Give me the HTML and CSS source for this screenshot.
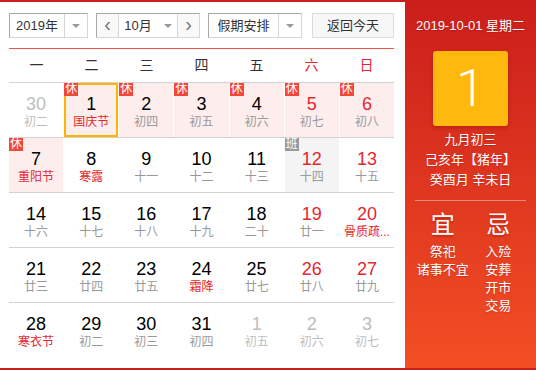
FILE: index.html
```html
<!DOCTYPE html>
<html>
	<head>
		<meta charset="UTF-8">
		<title>万年历</title>
		<link rel="stylesheet" href="styles.css">
	</head>
	<body>
		<div class="calendar">
			<div class="main">
				<div class="toolbar">
					<div class="select year">
						<span class="val">2019年</span>
						<span class="arrow"><i class="tri"></i></span>
					</div>
					<div class="select month">
						<span class="btn">&lsaquo;</span>
						<span class="val">10月<i class="tri"></i></span>
						<span class="btn">&rsaquo;</span>
					</div>
					<div class="select holiday">
						<span class="val">假期安排</span>
						<span class="arrow"><i class="tri"></i></span>
					</div>
					<div class="today-btn">返回今天</div>
				</div>
				<div class="week-head">
					<span>一</span><span>二</span><span>三</span><span>四</span><span>五</span>
					<span class="red">六</span><span class="red">日</span>
				</div>
				<div class="days">
					<div class="week">
						<div class="day other"><b>30</b><em>初二</em></div>
						<div class="day rest today"><i class="tag">休</i><b>1</b><em class="fest">国庆节</em></div>
						<div class="day rest"><i class="tag">休</i><b>2</b><em>初四</em></div>
						<div class="day rest"><i class="tag">休</i><b>3</b><em>初五</em></div>
						<div class="day rest"><i class="tag">休</i><b>4</b><em>初六</em></div>
						<div class="day rest weekend"><i class="tag">休</i><b>5</b><em>初七</em></div>
						<div class="day rest weekend"><i class="tag">休</i><b>6</b><em>初八</em></div>
					</div>
					<div class="week">
						<div class="day rest"><i class="tag">休</i><b>7</b><em class="fest">重阳节</em></div>
						<div class="day"><b>8</b><em class="fest">寒露</em></div>
						<div class="day"><b>9</b><em>十一</em></div>
						<div class="day"><b>10</b><em>十二</em></div>
						<div class="day"><b>11</b><em>十三</em></div>
						<div class="day work weekend"><i class="tag">班</i><b>12</b><em>十四</em></div>
						<div class="day weekend"><b>13</b><em>十五</em></div>
					</div>
					<div class="week">
						<div class="day"><b>14</b><em>十六</em></div>
						<div class="day"><b>15</b><em>十七</em></div>
						<div class="day"><b>16</b><em>十八</em></div>
						<div class="day"><b>17</b><em>十九</em></div>
						<div class="day"><b>18</b><em>二十</em></div>
						<div class="day weekend"><b>19</b><em>廿一</em></div>
						<div class="day weekend"><b>20</b><em class="fest">骨质疏...</em></div>
					</div>
					<div class="week">
						<div class="day"><b>21</b><em>廿三</em></div>
						<div class="day"><b>22</b><em>廿四</em></div>
						<div class="day"><b>23</b><em>廿五</em></div>
						<div class="day"><b>24</b><em class="fest">霜降</em></div>
						<div class="day"><b>25</b><em>廿七</em></div>
						<div class="day weekend"><b>26</b><em>廿八</em></div>
						<div class="day weekend"><b>27</b><em>廿九</em></div>
					</div>
					<div class="week last">
						<div class="day"><b>28</b><em class="fest">寒衣节</em></div>
						<div class="day"><b>29</b><em>初二</em></div>
						<div class="day"><b>30</b><em>初三</em></div>
						<div class="day"><b>31</b><em>初四</em></div>
						<div class="day other"><b>1</b><em>初五</em></div>
						<div class="day other"><b>2</b><em>初六</em></div>
						<div class="day other"><b>3</b><em>初七</em></div>
					</div>
				</div>
			</div>
			<div class="side">
				<p class="date">2019-10-01 星期二</p>
				<div class="big">1</div>
				<div class="lunar">
					<p>九月初三</p>
					<p>己亥年【猪年】</p>
					<p>癸酉月 辛未日</p>
				</div>
				<div class="line"></div>
				<div class="yiji">
					<div class="col">
						<h3>宜</h3>
						<p>祭祀</p>
						<p>诸事不宜</p>
					</div>
					<div class="col">
						<h3>忌</h3>
						<p>入殓</p>
						<p>安葬</p>
						<p>开市</p>
						<p>交易</p>
					</div>
				</div>
			</div>
		</div>
	</body>
</html>
```

FILE: styles.css
```css
*{
	margin: 0;
	padding: 0;
	box-sizing: border-box;
}
body{
	font-family: "Liberation Sans", "Noto Sans CJK SC", sans-serif;
	color: #000;
	background: #fff;
}
.calendar{
	display: flex;
	height: 370px;
	width: 536px;
	border-top: 2px solid #cc1f1c;
	border-bottom: 2px solid #cc1f1c;
}
.main{
	width: 405px;
	flex: none;
	padding: 11px 11px 0 9px;
}
/* 顶部工具条 */
.toolbar{
	display: flex;
	height: 36px;
	padding-bottom: 11px;
	border-bottom: 1px solid #e8594a;
	font-size: 13px;
	color: #333;
}
.select{
	display: flex;
	height: 25px;
	border: 1px solid #c9c9c9;
	border-color: #a9a9a9 #d6d6d6 #d6d6d6 #a9a9a9;
	background: #fff;
	margin-right: 8px;
}
.select .val{
	display: flex;
	align-items: center;
	justify-content: center;
	line-height: 23px;
}
.select .arrow{
	width: 23px;
	display: flex;
	align-items: center;
	justify-content: center;
	border-left: 1px solid #d6d6d6;
}
.tri{
	display: inline-block;
	width: 0;
	height: 0;
	border-left: 4px solid transparent;
	border-right: 4px solid transparent;
	border-top: 4px solid #999;
}
.year .val{
	width: 54px;
}
.month .btn{
	width: 21px;
	text-align: center;
	line-height: 21px;
	font-size: 20px;
	color: #777;
	background: #f9f9f9;
}
.month .val{
	width: 60px;
	border-left: 1px solid #d6d6d6;
	border-right: 1px solid #d6d6d6;
}
.month .tri{
	margin-left: 12px;
}
.holiday{
	margin-right: 10px;
}
.holiday .val{
	width: 69px;
}
.today-btn{
	width: 82px;
	height: 25px;
	line-height: 23px;
	text-align: center;
	border: 1px solid #dcdcdc;
	background: #f7f7f7;
}
/* 星期 */
.week-head{
	display: flex;
	height: 34px;
	border-bottom: 1px solid #d2d2d2;
	font-size: 14px;
	color: #333;
}
.week-head span{
	flex: 1;
	text-align: center;
	line-height: 32px;
}
.red{
	color: #e3272e;
}
/* 日期格子 */
.week{
	display: grid;
	grid-template-columns: repeat(7, 1fr);
	column-gap: 1px;
	height: 55px;
	border-bottom: 1px solid #d2d2d2;
}
.week.last{
	border-bottom: none;
}
.day{
	position: relative;
	text-align: center;
	padding-top: 11px;
}
.day b{
	display: block;
	font-weight: normal;
	font-size: 18px;
	line-height: 20px;
}
.day em{
	display: block;
	font-style: normal;
	font-size: 12px;
	line-height: 17px;
	color: #999;
	white-space: nowrap;
}
.day.weekend b{
	color: #e3272e;
}
.day em.fest{
	color: #e3272e;
}
.day.other b,.day.other em{
	color: #bdbdbd;
}
.day.rest{
	background: #fdeded;
}
.day.work{
	background: #f4f4f4;
}
.day.today{
	box-shadow: inset 0 0 0 2px #ffb400;
}
.tag{
	position: absolute;
	top: 0;
	left: 0;
	width: 14px;
	height: 13px;
	font-style: normal;
	font-size: 12px;
	line-height: 13px;
	color: #fff;
	background: #f2473a;
}
.work .tag{
	background: #999;
}
/* 右侧 */
.side{
	width: 131px;
	flex: none;
	background: linear-gradient(#cb1e1b, #f24f24);
	color: #fff;
	text-align: center;
	font-size: 13px;
	padding: 0 10px;
	text-shadow: 0 1px 1px rgba(120,0,0,0.25);
}
.date{
	line-height: 20px;
	padding-top: 14px;
}
.big{
	width: 75px;
	height: 75px;
	margin: 15px auto 4px;
	background: #feb80e;
	border-radius: 3px;
	box-shadow: 0 2px 4px rgba(120,0,0,0.3);
	font-family: Roboto, "Liberation Sans", sans-serif;
	font-weight: 300;
	font-size: 52px;
	line-height: 75px;
	text-shadow: none;
}
.lunar p{
	line-height: 20px;
}
.line{
	height: 1px;
	background: rgba(255,255,255,0.4);
	margin-top: 10px;
}
.yiji{
	display: flex;
}
.yiji .col{
	flex: 1;
}
.yiji h3{
	font-weight: normal;
	font-size: 24px;
	line-height: 28px;
	margin: 10px 0 4px;
	text-shadow: 0 2px 2px rgba(120,0,0,0.3);
}
.yiji p{
	line-height: 18px;
	white-space: nowrap;
}
```
